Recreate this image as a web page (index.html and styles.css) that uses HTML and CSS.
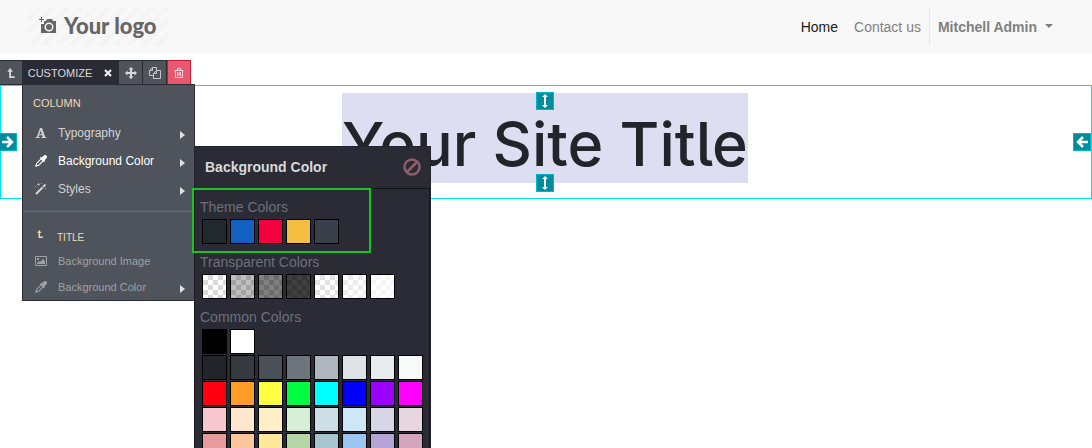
FILE: index.html
```html
<!DOCTYPE html>
<html lang="en">
<head>
<meta charset="utf-8">
<title>Your Site Title</title>
<link rel="stylesheet" href="styles.css">
</head>
<body>
<header class="navbar">
  <a class="logo" href="#">
    <svg width="18" height="18" viewBox="0 0 18 18" aria-hidden="true"><path fill="#666" fill-rule="evenodd" d="M2 0h1v2h2v1H3v2H2V3H0V2h2zM8 2h5l1 2h3v12H2V7h3V4h2zM10 5.500a4.500 4.500 0 1 0 0 9 4.500 4.500 0 0 0 0-9zm0 1.500a3 3 0 1 1 0 6 3 3 0 0 1 0-6z"/></svg>
    <span>Your logo</span>
  </a>
  <nav class="links">
    <a class="link active" href="#">Home</a>
    <a class="link" href="#">Contact us</a>
    <button class="user" type="button">Mitchell Admin <span class="caret"></span></button>
  </nav>
</header>
<main class="page">
  <section class="column">
    <h1 class="title">Your Site Title</h1>
    <span class="handle left"><svg width="16" height="16" viewBox="0 0 16 16"><path d="M2 8h10M7 3l5 5-5 5" fill="none" stroke="#fff" stroke-width="2.500"/></svg></span>
    <span class="handle right"><svg width="16" height="16" viewBox="0 0 16 16"><path d="M14 8H4M9 3L4 8l5 5" fill="none" stroke="#fff" stroke-width="2.500"/></svg></span>
    <span class="handle top"><svg width="16" height="16" viewBox="0 0 16 16"><path d="M8 1l3 3H9v8h2l-3 3-3-3h2V4H5z" fill="#fff"/></svg></span>
    <span class="handle bottom"><svg width="16" height="16" viewBox="0 0 16 16"><path d="M8 1l3 3H9v8h2l-3 3-3-3h2V4H5z" fill="#fff"/></svg></span>
  </section>
</main>
<div class="toolbar">
  <button class="tool parent" type="button" aria-label="Select parent"><svg width="8" height="10" viewBox="0 0 8 11"><path d="M3 0l3 4H4v5h4v2H2V4H0z" fill="#d9d9d9"/></svg></button>
  <button class="tool customize" type="button">CUSTOMIZE <svg width="8" height="8" viewBox="0 0 8 8"><path d="M1 1l6 6M7 1L1 7" stroke="#eee" stroke-width="2.200"/></svg></button>
  <button class="tool" type="button" aria-label="Move"><svg width="12" height="12" viewBox="0 0 12 12"><path d="M6 0l2.500 2.500H7V5h2.500V3.500L12 6 9.500 8.500V7H7v2.500h1.500L6 12 3.500 9.500H5V7H2.500v1.500L0 6l2.500-2.500V5H5V2.500H3.500z" fill="#d9d9d9"/></svg></button>
  <button class="tool" type="button" aria-label="Duplicate"><svg width="12" height="12" viewBox="0 0 12 12"><path d="M4.500 8.500h-4V3.500l3-3h4v3M3.500.5v3h-3M4.500 6.500l3-3h4v8h-7zM7.500 3.500v3h-3" fill="none" stroke="#c5c6c8"/></svg></button>
  <button class="tool remove" type="button" aria-label="Remove"><svg width="10" height="10" viewBox="0 0 10 10"><path d="M.5 2.500h9M3.500 2.500v-2h3v2M1.500 2.500v7h7v-7M3.500 4v4M5 4v4M6.500 4v4" fill="none" stroke="#f6d5da"/></svg></button>
</div>
<div class="menu">
  <h2 class="group">COLUMN</h2>
  <button class="item" type="button"><svg class="icon" viewBox="0 0 12 12"><path fill="currentColor" fill-rule="evenodd" d="M5 1h2l3.200 9 1.300.3v.7H6.500v-.7l1.200-.3L7.200 8.300H4L3.400 10l1.400.3v.7H.5v-.7l1.300-.3zM5.500 3.700L4.300 7.300h2.500z"/></svg><span>Typography</span><i class="arrow"></i></button>
  <button class="item selected" type="button"><svg class="icon" viewBox="0 0 12 12"><path fill="currentColor" fill-rule="evenodd" d="M11.500.5c.8.8.6 2.100-.2 2.900L9.500 5.200l.7.7-1.200 1.200-.7-.6-4.500 4.500-1.800.2L1 12l-1-1 .8-1 .2-1.800 4.500-4.500-.6-.7 1.200-1.200.7.7L8.600.7c.8-.8 2.100-1 2.900-.2zM6.200 4.500L2 8.700 1.900 10h1.300l4.200-4.300z"/></svg><span>Background Color</span><i class="arrow"></i></button>
  <button class="item" type="button"><svg class="icon" viewBox="0 0 12 12"><path d="M1 11L7.500 4.500M8 4L10.500 1.500" stroke="currentColor" stroke-width="2"/><path fill="currentColor" opacity=".7" d="M2 1h1V0h1v1h1v1H4v1H3V2H2zM6 0h1v1H6zM10 5h1v1h-1zM0 3h1v1H0z"/></svg><span>Styles</span><i class="arrow"></i></button>
  <hr class="rule">
  <h2 class="group sub"><svg width="6" height="8" viewBox="0 0 8 11"><path d="M3 0l3 4H4v5h4v2H2V4H0z" fill="#f0d9b0"/></svg>TITLE</h2>
  <button class="item small" type="button"><svg class="icon" viewBox="0 0 12 12"><path d="M.5 1.500h11v9H.5z" fill="none" stroke="currentColor"/><path fill="currentColor" d="M2 9V8l2-2 1 1 3-3 2 2v3zM2 3h2v2H2z"/></svg><span>Background Image</span></button>
  <button class="item small" type="button"><svg class="icon" viewBox="0 0 12 12"><path fill="currentColor" fill-rule="evenodd" d="M11.500.5c.8.8.6 2.100-.2 2.900L9.500 5.200l.7.7-1.200 1.200-.7-.6-4.500 4.500-1.800.2L1 12l-1-1 .8-1 .2-1.800 4.500-4.500-.6-.7 1.200-1.200.7.7L8.600.7c.8-.8 2.100-1 2.900-.2zM6.200 4.500L2 8.700 1.900 10h1.300l4.200-4.300z"/></svg><span>Background Color</span><i class="arrow"></i></button>
</div>
<div class="picker">
  <div class="picker-head"><h2 class="picker-title">Background Color</h2><button class="reset" type="button" aria-label="No color"><svg width="18" height="18" viewBox="0 0 18 18"><path d="M3.500 14.500l11-11" stroke="#8d5d69" stroke-width="2.500"/><circle cx="9" cy="9" r="7.500" fill="none" stroke="#8d5d69" stroke-width="2.500"/></svg></button></div>
  <div class="picker-body">
    <h3 class="label">Theme Colors</h3>
    <div class="swatches">
      <button class="swatch" style="background:#23282f"></button><button class="swatch" style="background:#1160c2"></button><button class="swatch" style="background:#f2003f"></button><button class="swatch" style="background:#f6be40"></button><button class="swatch" style="background:#3a3f4b"></button>
    </div>
    <h3 class="label">Transparent Colors</h3>
    <div class="swatches">
      <button class="swatch checker" style="--a:#fff;--b:#d9d9d9"></button><button class="swatch checker" style="--a:#bfbfbf;--b:#a3a3a3"></button><button class="swatch checker" style="--a:#808080;--b:#6c6c6c"></button><button class="swatch checker" style="--a:#404040;--b:#363636"></button><button class="swatch checker" style="--a:#fff;--b:#e2e2e2"></button><button class="swatch checker" style="--a:#fff;--b:#ececec"></button><button class="swatch checker" style="--a:#fff;--b:#f5f5f5"></button>
    </div>
    <h3 class="label">Common Colors</h3>
    <div class="swatches">
      <button class="swatch" style="background:#000"></button><button class="swatch" style="background:#fff"></button>
    </div>
    <div class="swatches">
      <button class="swatch" style="background:#212529"></button><button class="swatch" style="background:#343a40"></button><button class="swatch" style="background:#495057"></button><button class="swatch" style="background:#6c757d"></button><button class="swatch" style="background:#adb5bd"></button><button class="swatch" style="background:#dee2e6"></button><button class="swatch" style="background:#e9ecef"></button><button class="swatch" style="background:#f8f9fa"></button>
      <button class="swatch" style="background:#ff0010"></button><button class="swatch" style="background:#ff9c2a"></button><button class="swatch" style="background:#ffff42"></button><button class="swatch" style="background:#00ff42"></button><button class="swatch" style="background:#00ffff"></button><button class="swatch" style="background:#0000ff"></button><button class="swatch" style="background:#9c00ff"></button><button class="swatch" style="background:#ff00ff"></button>
      <button class="swatch" style="background:#f7c6ce"></button><button class="swatch" style="background:#ffe7ce"></button><button class="swatch" style="background:#ffefc6"></button><button class="swatch" style="background:#d6efd6"></button><button class="swatch" style="background:#cedee7"></button><button class="swatch" style="background:#cee7f7"></button><button class="swatch" style="background:#d6d6e7"></button><button class="swatch" style="background:#e7d6de"></button>
      <button class="swatch" style="background:#e79c9c"></button><button class="swatch" style="background:#ffc69c"></button><button class="swatch" style="background:#ffe79c"></button><button class="swatch" style="background:#b5d6a5"></button><button class="swatch" style="background:#a5c6ce"></button><button class="swatch" style="background:#9cc6ef"></button><button class="swatch" style="background:#b5a5d6"></button><button class="swatch" style="background:#d6a5bd"></button>
    </div>
  </div>
  <div class="highlight"></div>
</div>
</body>
</html>
```
FILE: styles.css
```css
* { box-sizing: border-box; }
body {
  margin: 0;
  min-height: 100vh;
  overflow: hidden;
  position: relative;
  background: #fff;
  font: 14px/20px "Liberation Sans", Arial, sans-serif;
}
button { margin: 0; padding: 0; border: 0; background: none; font: inherit; color: inherit; cursor: pointer; }
h1, h2, h3 { margin: 0; font-weight: 400; }
svg { display: block; flex: none; }
a { text-decoration: none; }

.navbar { display: flex; align-items: center; justify-content: space-between; padding: 8px 39px 8px 28px; background: #f8f8f8; }
.logo {
  display: flex; align-items: center; gap: 7px; height: 37px; padding: 0 11px 1px;
  background: repeating-linear-gradient(135deg, #f8f8f8 0 5px, #f4f4f4 5px 10px);
  color: #666; font: 900 22px/36px Lato, sans-serif;
}
.links { display: flex; align-items: center; }
.link { padding: 0 8px; color: #808080; }
.link.active { color: #1a1a1a; }
.user { display: flex; align-items: center; gap: 8px; height: 37px; padding: 0 0 0 8px; border-left: 1px solid #e7e7e7; color: #808080; font-weight: 700; }
.caret { margin-bottom: 2px; border: 4px solid transparent; border-top-color: #808080; border-bottom: 0; }

.page { padding-top: 32px; }
.column { position: relative; display: flex; justify-content: center; padding: 7px 2px 15px 0; border: 1px solid #00e2f7; }
.title { padding-top: 12px; background: #dedef2; color: #212529; font: 500 61px/78px Inter, sans-serif; font-feature-settings: "cv05"; }
.handle { position: absolute; display: flex; align-items: center; justify-content: center; width: 18px; height: 18px; border: 1px solid #00b5c6; background: #008c9a; }
.left { left: -2px; top: 47px; }
.right { right: 0; top: 47px; }
.top { left: calc(50% - 10px); top: 6px; }
.bottom { left: calc(50% - 10px); bottom: 6px; }

.toolbar { position: absolute; top: 60px; left: 0; display: flex; height: 25px; border-top: 1px solid #2b2b36; border-bottom: 1px solid #2b2b36; color: #d9d9d9; font-size: 11px; }
.tool { display: flex; align-items: center; justify-content: center; width: 24px; border-right: 1px solid #2b2b36; background: #4f535b; }
.parent { width: 22px; border: 0; }
.customize { width: 97px; gap: 12px; background: #2b2b36; }
.remove { margin: -1px 0; border: 1px solid #c9183a; background: #e9586f; }

.menu { position: absolute; top: 84px; left: 22px; width: 173px; padding: 7px 0 0; border: 1px solid #2b2b36; background: #4f535b; color: #d2d3d5; }
.group { padding: 0 0 5px 10px; color: #f0d9b0; font-size: 11px; line-height: 22px; }
.sub { display: flex; align-items: flex-start; gap: 14px; padding: 5px 0 0 14px; font-size: 10px; line-height: 20px; }
.item { display: flex; align-items: center; width: 100%; height: 28px; padding: 0 9px 0 12px; gap: 11px; font-size: 12px; text-align: left; }
.selected { color: #fff; }
.small { height: 26px; color: #9fa1a5; font-size: 11px; }
.icon { width: 12px; height: 12px; }
.sub svg { margin-top: 2px; }
.arrow { margin: 4px 0 0 auto; border: 4px solid transparent; border-left: 5px solid #e2e2e2; border-right: 0; }
.rule { height: 1px; margin: 8px 0 11px; border: 0; background: #6b6a6a; }

.picker { position: absolute; top: 146px; left: 194px; width: 237px; border: 1px solid #23232d; background: #2b2b36; }
.picker-head { display: flex; align-items: center; justify-content: space-between; height: 42px; padding: 0 9px 2px 10px; border-bottom: 1px solid #111116; }
.picker-title { color: #d9d9d9; font-size: 14px; font-weight: 700; }
.picker-body { padding: 8px 4px 0 5px; border: 1px solid #17171d; border-top: 0; margin: 0 0 0 -1px; }
.label { color: #6c717c; font-size: 14px; line-height: 20px; }
.swatches { display: flex; flex-wrap: wrap; gap: 1px 3px; padding: 1px 0 0 2px; }
.label + .swatches { padding-top: 2px; }
.swatches + .label { margin-top: 8px; }
.swatch { width: 25px; height: 25px; border: 1px solid #000; }
.checker { background: conic-gradient(var(--b) 25%, var(--a) 0 50%, var(--b) 0 75%, var(--a) 0) 0 0 / 10px 10px; }
.highlight { position: absolute; top: 41px; left: -3px; width: 179px; height: 65px; border: 2px solid #17c522; }
```
